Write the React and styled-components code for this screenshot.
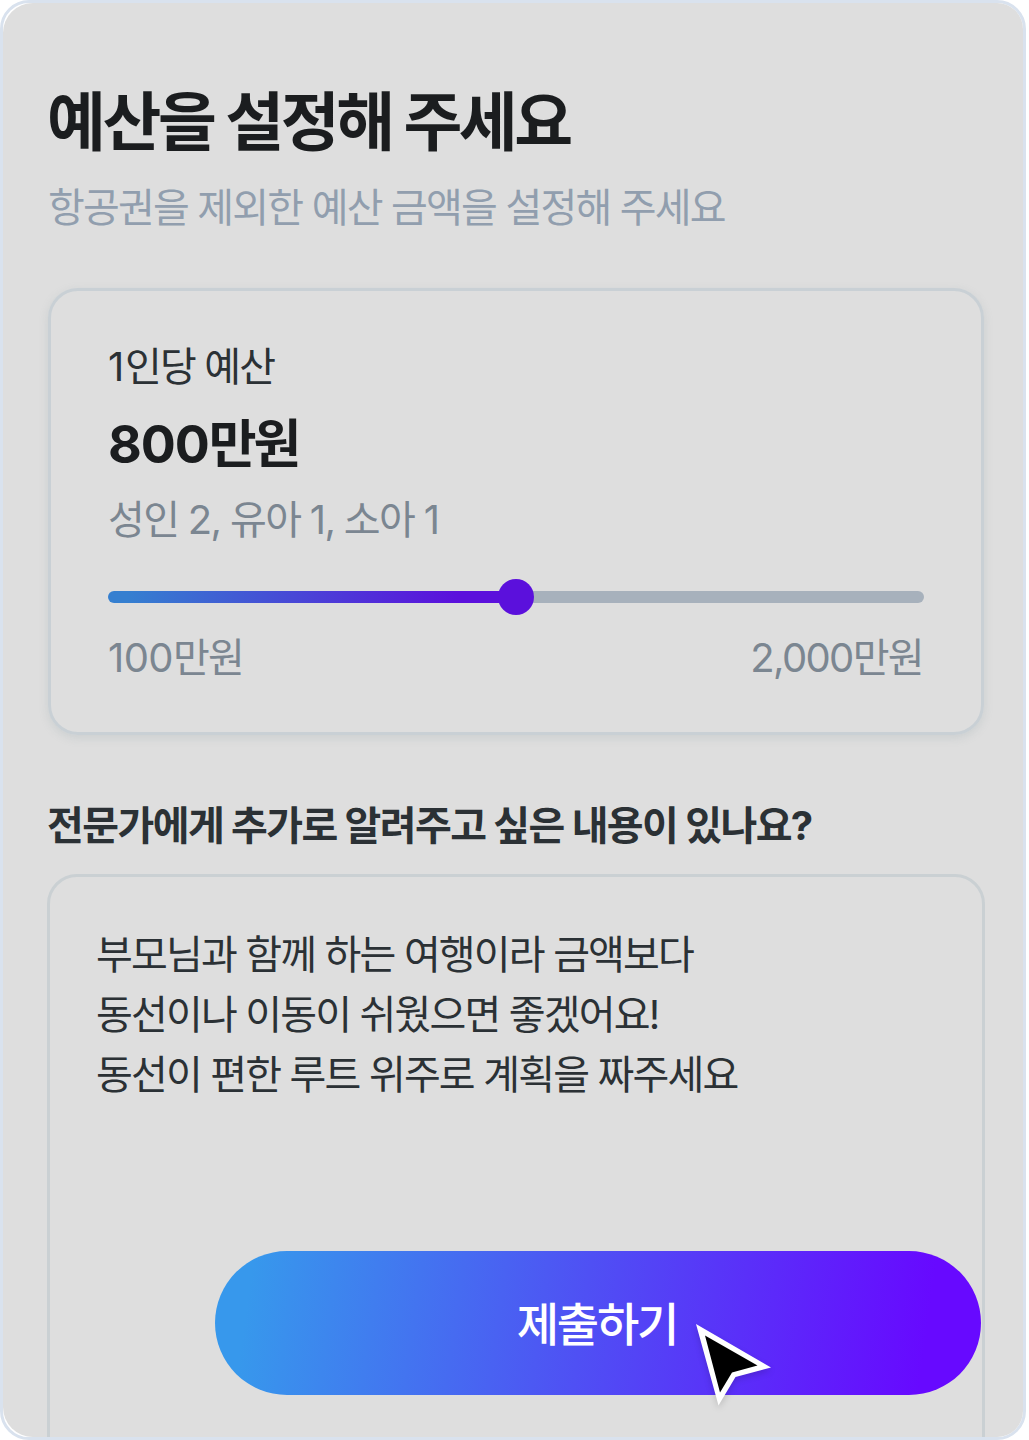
import React, { useState } from 'react';
import styled, { createGlobalStyle } from 'styled-components';

const GlobalStyle = createGlobalStyle`
  * {
    box-sizing: border-box;
  }
  body {
    margin: 0;
    background: #ffffff;
    font-family: Inter, 'Noto Sans CJK KR', sans-serif;
  }
`;

const Frame = styled.main`
  width: 1026px;
  height: 1440px;
  overflow: hidden;
  border: 3px solid #d9e2ee;
  border-radius: 29px;
  background: #ffffff;
`;

const Screen = styled.div`
  height: 1434px;
  padding: 77px 38px 0 44px;
  overflow: hidden;
  border-radius: 30px 22px 22px 30px;
  background: #dedede;
`;

const Text = styled.p`
  margin: 0;
  width: max-content;
  white-space: pre;
  font-size: ${props => props.$size}px;
  line-height: ${props => props.$line}px;
  font-weight: ${props => props.$weight || 400};
  letter-spacing: ${props => props.$spacing || 0}px;
  color: ${props => props.$color};
`;

const Digits = styled.span`
  letter-spacing: ${props => props.$spacing}px;
`;

const Heading = styled.header`
  display: flex;
  flex-direction: column;
  gap: 14px;
`;

const Subtitle = styled.div`
  padding-left: 1px;
`;

const BudgetCard = styled.section`
  width: 936px;
  height: 447px;
  margin: 50px 0 0 1px;
  padding: 46px 57px 0;
  border: 3px solid #c9d0d5;
  border-radius: 30px;
  box-shadow: 0 3px 10px rgba(130, 150, 155, 0.2);
`;

const Amount = styled.div`
  padding: 6px 0 3px;
`;

const Slider = styled.input`
  display: block;
  appearance: none;
  width: 816px;
  height: 36px;
  margin: 29px 0 13px;
  background: transparent;
  &::-webkit-slider-runnable-track {
    height: 12px;
    border-radius: 6px;
    background: linear-gradient(90deg, #357fd0 20px, #5b10dc 350px, #5b10dc 408px, #a7b1bc 408px);
  }
  &::-webkit-slider-thumb {
    appearance: none;
    width: 36px;
    height: 36px;
    margin-top: -12px;
    border-radius: 50%;
    background: #5b10dc;
  }
`;

const Range = styled.div`
  display: flex;
  justify-content: space-between;
  width: 815px;
`;

const Question = styled.div`
  margin: 61px 0 18px;
`;

const Notes = styled.section`
  width: 938px;
  height: 600px;
  padding: 48px 46px 0;
  border: 3px solid #cad0d3;
  border-radius: 30px;
`;

const SubmitButton = styled.button`
  position: absolute;
  top: 1251px;
  left: 215px;
  width: 766px;
  height: 144px;
  display: flex;
  align-items: center;
  justify-content: center;
  padding: 2px 2px 0 0;
  border: 0;
  border-radius: 72px;
  background: linear-gradient(98deg, #3798ec 5%, #4f50f4 48%, #6709ff 92%);
  font-family: inherit;
`;

const Cursor = styled.svg`
  position: absolute;
  left: 690px;
  top: 1318px;
  filter: drop-shadow(0 3px 3px rgba(0, 0, 0, 0.15));
`;

function App() {
  const [budget, setBudget] = useState(800);

  return (
    <>
      <GlobalStyle />
      <Frame>
        <Screen>
          <Heading>
            <Text as="h1" $size={64} $line={84} $weight={700} $spacing={-3.4} $color="#1b1d1f">예산을 설정해 주세요</Text>
            <Subtitle>
              <Text $size={40} $line={60} $spacing={-1.82} $color="#919eae">항공권을 제외한 예산 금액을 설정해 주세요</Text>
            </Subtitle>
          </Heading>
          <BudgetCard>
            <Text $size={40} $line={60} $spacing={-1.84} $color="#2b3135"><Digits $spacing={0.7}>1</Digits>인당 예산</Text>
            <Amount>
              <Text $size={52} $line={84} $weight={700} $spacing={-3} $color="#1b1d1f"><Digits $spacing={-1.1}>{budget}</Digits>만원</Text>
            </Amount>
            <Text $size={40} $line={60} $spacing={-1.67} $color="#7b8691">성인 2, 유아 1, 소아 1</Text>
            <Slider type="range" min="-300" max="1900" value={budget} onChange={e => setBudget(e.target.value)} />
            <Range>
              <Text $size={40} $line={60} $spacing={-1.84} $color="#7b8691"><Digits $spacing={-0.6}>100</Digits>만원</Text>
              <Text $size={40} $line={60} $spacing={-1.65} $color="#7b8691">2,000만원</Text>
            </Range>
          </BudgetCard>
          <Question>
            <Text $size={40} $line={60} $weight={700} $spacing={-1.58} $color="#2b3135">전문가에게 추가로 알려주고 싶은 내용이 있나요?</Text>
          </Question>
          <Notes>
            <Text $size={40} $line={60} $spacing={-1.84} $color="#2b3135">부모님과 함께 하는 여행이라 금액보다</Text>
            <Text $size={40} $line={60} $spacing={-1.84} $color="#2b3135">동선이나 이동이 쉬웠으면 좋겠어요!</Text>
            <Text $size={40} $line={60} $spacing={-1.84} $color="#2b3135">동선이 편한 루트 위주로 계획을 짜주세요</Text>
          </Notes>
        </Screen>
      </Frame>
      <SubmitButton type="button">
        <Text as="span" $size={46} $line={60} $weight={500} $spacing={-2.2} $color="#ffffff">제출하기</Text>
      </SubmitButton>
      <Cursor width="90" height="95" viewBox="0 0 90 95">
        <path d="M6 6 L81 49.5 L45.5 59 L28.5 87.5 Z" fill="#fff" />
        <path d="M15 17.5 L67.5 47.5 L42 54.5 L30 74.5 Z" fill="#000" />
      </Cursor>
    </>
  );
}

export default App;
